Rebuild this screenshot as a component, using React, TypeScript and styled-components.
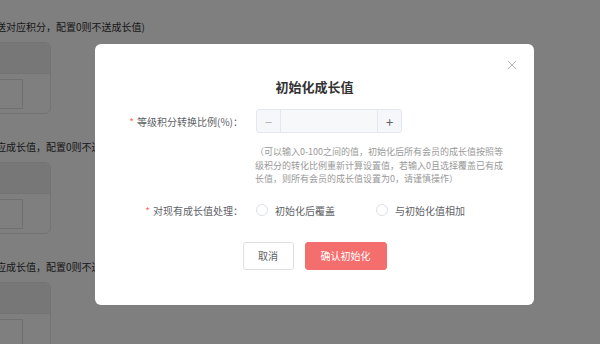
import React from 'react';
import styled, { createGlobalStyle } from 'styled-components';

const GlobalStyle = createGlobalStyle`
    html, body {
        margin: 0;
        padding: 0;
        background: #fff;
    }
    body {
        font-family: "Noto Sans CJK SC", "Noto Sans", sans-serif;
        color: #333;
    }
`;

const Page = styled.div`
    position: relative;
    width: 600px;
    height: 344px;
    overflow: hidden;
    background: #fff;
`;

const Behind = styled.div`
    display: flex;
    flex-direction: column;
    margin-left: -150px;
    padding-top: 19px;
`;

const Note = styled.div`
    font-size: 10px;
    line-height: 16px;
    height: 16px;
    margin-left: 146px;
    white-space: nowrap;
    color: #333;
`;

const Card = styled.div`
    width: 199px;
    height: 70px;
    margin: 7px 0 25px;
    border: 1px solid #e6e6e6;
    border-radius: 6px;
    overflow: hidden;
`;

const CardHead = styled.div`
    height: 30px;
    background: #eeeeee;
    border-bottom: 1px solid #e6e6e6;
`;

const CardBody = styled.div`
    padding: 5px 0 0 20px;
`;

const CardInput = styled.div`
    width: 150px;
    height: 28px;
    border: 1px solid #e0e0e0;
`;

const Overlay = styled.div`
    position: absolute;
    inset: 0;
    background: rgba(0, 0, 0, 0.5);
    padding: 44px 0 0 95px;
    box-sizing: border-box;
`;

const Modal = styled.div`
    position: relative;
    width: 439px;
    height: 261px;
    box-sizing: border-box;
    background: #fff;
    border-radius: 6px;
    padding-top: 34px;
    display: flex;
    flex-direction: column;
`;

const Close = styled.button`
    position: absolute;
    top: 16px;
    right: 17px;
    width: 10px;
    height: 10px;
    padding: 0;
    border: 0;
    background: none;
    display: flex;
`;

const Title = styled.h3`
    margin: 0;
    text-align: center;
    font-size: 13px;
    line-height: 18px;
    font-weight: 700;
    color: #333;
`;

const FormRow = styled.div<{ $top: number }>`
    display: flex;
    align-items: center;
    margin-top: ${p => p.$top}px;
`;

const Label = styled.label`
    width: 148px;
    padding-right: 13px;
    box-sizing: content-box;
    text-align: right;
    font-size: 10px;
    color: #606266;
    white-space: nowrap;
    &::before {
        content: '*';
        color: #f56c6c;
        margin-right: 3px;
    }
`;

const Stepper = styled.div`
    display: flex;
    width: 146px;
    height: 24px;
    box-sizing: border-box;
    border: 1px solid #e4e7ed;
    border-radius: 3px;
    background: #f5f7fa;
    overflow: hidden;
`;

const StepBtn = styled.span<{ $side: 'left' | 'right' }>`
    width: 23px;
    display: flex;
    align-items: center;
    justify-content: center;
    color: ${p => (p.$side === 'left' ? '#b0b3b8' : '#606266')};
    font-size: 13px;
    ${p => (p.$side === 'left' ? 'border-right' : 'border-left')}: 1px solid #e4e7ed;
`;

const StepField = styled.span`
    flex: 1;
    background: #f7f8fa;
`;

const Help = styled.div`
    margin: 12px 0 0 160px;
    font-size: 9px;
    line-height: 13.5px;
    color: #999;
    white-space: nowrap;
`;

const HelpLine = styled.div``;

const RadioGroup = styled.div`
    display: flex;
    align-items: center;
`;

const RadioItem = styled.label`
    display: flex;
    align-items: center;
    font-size: 10px;
    color: #606266;
    margin-right: 41px;
`;

const RadioDot = styled.span`
    width: 10px;
    height: 10px;
    border: 1px solid #dcdfe6;
    border-radius: 50%;
    margin-right: 7px;
`;

const Footer = styled.div`
    display: flex;
    justify-content: center;
    gap: 11px;
    margin-top: 24px;
`;

const Button = styled.button<{ $primary?: boolean }>`
    height: 28px;
    padding: 0;
    box-sizing: border-box;
    border-radius: 3px;
    font-family: inherit;
    font-size: 10px;
    border: 1px solid ${p => (p.$primary ? '#f46e6e' : '#dcdfe6')};
    background: ${p => (p.$primary ? '#f46e6e' : '#fff')};
    color: ${p => (p.$primary ? '#fff' : '#606266')};
    width: ${p => (p.$primary ? 82 : 51)}px;
`;

const sections = [
    '送对应积分，配置0则不送成长值)',
    '应成长值，配置0则不送成长值',
    '应成长值，配置0则不送成长值',
];

const App: React.FC = () => {
    return (
        <Page>
            <GlobalStyle />
            <Behind>
                {sections.map((t, i) => (
                    <React.Fragment key={i}>
                        <Note>{t}</Note>
                        <Card>
                            <CardHead />
                            <CardBody>
                                <CardInput />
                            </CardBody>
                        </Card>
                    </React.Fragment>
                ))}
            </Behind>
            <Overlay>
                <Modal>
                    <Close aria-label="关闭">
                        <svg width="10" height="10" viewBox="0 0 10 10">
                            <path d="M1 1L9 9M9 1L1 9" stroke="#b4b4b4" strokeWidth="1" />
                        </svg>
                    </Close>
                    <Title>初始化成长值</Title>
                    <FormRow $top={13}>
                        <Label>等级积分转换比例(%)：</Label>
                        <Stepper>
                            <StepBtn $side="left">−</StepBtn>
                            <StepField />
                            <StepBtn $side="right">+</StepBtn>
                        </Stepper>
                    </FormRow>
                    <Help>
                        <HelpLine>（可以输入0-100之间的值，初始化后所有会员的成长值按照等</HelpLine>
                        <HelpLine>级积分的转化比例重新计算设置值，若输入0且选择覆盖已有成</HelpLine>
                        <HelpLine>长值，则所有会员的成长值设置为0，请谨慎操作）</HelpLine>
                    </Help>
                    <FormRow $top={17}>
                        <Label>对现有成长值处理：</Label>
                        <RadioGroup>
                            <RadioItem>
                                <RadioDot />
                                初始化后覆盖
                            </RadioItem>
                            <RadioItem>
                                <RadioDot />
                                与初始化值相加
                            </RadioItem>
                        </RadioGroup>
                    </FormRow>
                    <Footer>
                        <Button>取消</Button>
                        <Button $primary>确认初始化</Button>
                    </Footer>
                </Modal>
            </Overlay>
        </Page>
    );
};

export default App;
